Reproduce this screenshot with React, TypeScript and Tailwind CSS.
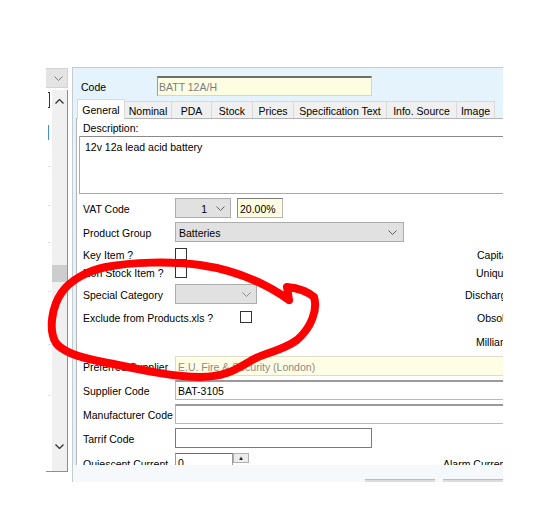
type Tab = { label: string; w: number; active?: boolean };

const tabs: Tab[] = [
  { label: "General", w: 48, active: true },
  { label: "Nominal", w: 47 },
  { label: "PDA", w: 40 },
  { label: "Stock", w: 41 },
  { label: "Prices", w: 41 },
  { label: "Specification Text", w: 93 },
  { label: "Info. Source", w: 70 },
  { label: "Image", w: 38 },
];

function ChevronDown({ color = "#606060" }: { color?: string }) {
  return (
    <svg width="9" height="5" viewBox="0 0 9 5" className="shrink-0">
      <polyline points="0.5,0.5 4.5,4.5 8.5,0.5" fill="none" stroke={color} strokeWidth="1" />
    </svg>
  );
}

function ChevronUp() {
  return (
    <svg width="9" height="5" viewBox="0 0 9 5" className="shrink-0">
      <polyline points="0.5,4.5 4.5,0.5 8.5,4.5" fill="none" stroke="#333" strokeWidth="1.3" />
    </svg>
  );
}

function Checkbox() {
  return <div className="h-[12px] w-[12px] shrink-0 border border-[#333] bg-white" />;
}

function Label({ children, w = 98 }: { children: React.ReactNode; w?: number }) {
  return (
    <div className="shrink-0 whitespace-nowrap pl-[6px] pt-[2px]" style={{ width: w }}>
      {children}
    </div>
  );
}

// labels of the next column, cut off by the window edge
function SideLabel({ children, w = 39, pl = 13 }: { children: string; w?: number; pl?: number }) {
  return (
    <div
      className="ml-auto shrink-0 overflow-hidden whitespace-nowrap pt-[2px]"
      style={{ width: w, paddingLeft: pl }}
    >
      {children}
    </div>
  );
}

function TextBox({ w, value }: { w: number; value?: string }) {
  return (
    <div
      className="flex h-[20px] shrink-0 items-center border border-[#b8b8b8] border-t-2 border-t-[#9a9a9a] bg-white pl-[2px] pt-[1px]"
      style={{ width: w }}
    >
      {value}
    </div>
  );
}

export default function App() {
  return (
    <div className="relative h-[524px] w-[557px] overflow-hidden bg-white font-['Liberation_Sans',Arial,sans-serif] text-[10.5px] leading-[12px] text-black">
      <div className="flex gap-[4px] pl-[46px] pt-[67px]">
        {/* left list strip */}
        <div className="flex w-[22px] shrink-0 flex-col">
          <div className="mt-[1px] flex h-[20px] items-center justify-end border border-l-0 border-[#d2d2d2] bg-[#e4e4e4] pr-[4px]">
            <ChevronDown color="#7a7a7a" />
          </div>
          <div className="mt-[2px] flex h-[382px] border-b border-r border-[#8f8f8f]">
            <div className="flex w-[6px] flex-col">
              <div className="ml-[2px] mt-[2px] h-[16px] w-[2px] border-y border-r border-[#333]" />
              <div className="ml-[2px] mt-[17px] h-[15px] w-[1px] bg-[#3f8fde]" />
              <div className="ml-[2px] mt-[26px] h-[1px] w-[3px] bg-[#d6e4f2]" />
              <div className="ml-[2px] mt-[38px] h-[1px] w-[3px] bg-[#d6e4f2]" />
              <div className="ml-[2px] mt-[36px] h-[1px] w-[3px] bg-[#d6e4f2]" />
              <div className="ml-[2px] mt-[48px] h-[1px] w-[3px] bg-[#d6e4f2]" />
              <div className="ml-[2px] mt-[52px] h-[1px] w-[3px] bg-[#d6e4f2]" />
              <div className="ml-[2px] mt-[50px] h-[1px] w-[3px] bg-[#d6e4f2]" />
            </div>
            <div className="flex w-[15px] flex-col items-center bg-[#f0f0f0] pt-[9px]">
              <ChevronUp />
              <div className="mt-[161px] h-[17px] w-full bg-[#cdcdcd]" />
              <div className="mt-[162px] rotate-180">
                <ChevronUp />
              </div>
            </div>
          </div>
        </div>

        {/* main panel */}
        <div className="flex w-[431px] shrink-0 flex-col border-l border-t border-[#c4ccd2] bg-[#e5f3fc]">
          <div className="flex h-[32px] items-start pt-[8px]">
            <div className="flex h-[20px] w-[84px] shrink-0 items-center pl-[8px] pt-[2px]">Code</div>
            <div className="flex h-[20px] w-[215px] items-center border border-[#d6d6c8] border-l-[#9a9a9a] border-t-2 border-t-[#6e6e6e] bg-[#fffde1] pl-[1px] pt-[1px] text-[#7c7c7c]">
              BATT 12A/H
            </div>
          </div>

          <div className="flex h-[18px] items-end pl-[4px]">
            {tabs.map((t) =>
              t.active ? (
                <div
                  key={t.label}
                  className="relative z-10 -mb-px flex h-[20px] items-center justify-center border-x border-t border-[#d9d9d9] bg-white"
                  style={{ width: t.w }}
                >
                  {t.label}
                </div>
              ) : (
                <div
                  key={t.label}
                  className="flex h-[17px] items-center justify-center border-r border-t border-[#d9d9d9] bg-[#f0f0f0] pt-[1px]"
                  style={{ width: t.w }}
                >
                  {t.label}
                </div>
              ),
            )}
          </div>

          <div className="flex">
            <div className="w-[3px] shrink-0" />
            <div className="flex h-[347px] w-[427px] flex-col overflow-hidden border-l border-t border-[#b4b4b4] bg-white">
              <div className="flex h-[17px] shrink-0 items-center pl-[6px] pt-[1px]">Description:</div>
              <div className="ml-[2px] h-[58px] w-[440px] shrink-0 border border-[#a9a9a9] border-t-[#8a8a8a] pl-[5px] pt-[4px]">
                12v 12a lead acid battery
              </div>

              <div className="mt-[4px] flex h-[20px] shrink-0 items-center">
                <Label>VAT Code</Label>
                <div className="flex h-[20px] w-[56px] items-center justify-end gap-[9px] border border-[#adadad] bg-[#e1e1e1] pr-[5px]">
                  <span className="pt-[2px]">1</span>
                  <ChevronDown />
                </div>
                <div className="ml-[6px] flex h-[20px] w-[46px] items-center border border-[#b4b4b4] border-l-[#8a8a8a] border-t-[#7a7a7a] bg-[#fffde1] pl-[2px] pt-[2px]">
                  20.00%
                </div>
              </div>

              <div className="mt-[4px] flex h-[20px] shrink-0 items-center">
                <Label>Product Group</Label>
                <div className="flex h-[20px] w-[229px] items-center justify-between border border-[#adadad] bg-[#e1e1e1] pl-[3px] pr-[6px]">
                  <span className="pt-[2px]">Batteries</span>
                  <ChevronDown />
                </div>
              </div>

              <div className="mt-[3px] flex h-[18px] shrink-0 items-center">
                <Label>Key Item ?</Label>
                <Checkbox />
                <SideLabel>Capital Item ?</SideLabel>
              </div>

              <div className="flex h-[18px] shrink-0 items-center">
                <Label>Non Stock Item ?</Label>
                <Checkbox />
                <SideLabel pl={12}>Unique Item ?</SideLabel>
              </div>

              <div className="mt-[3px] flex h-[20px] shrink-0 items-center">
                <Label>Special Category</Label>
                <div className="flex h-[20px] w-[82px] items-center justify-end border border-[#adadad] bg-[#e1e1e1] pr-[5px]">
                  <ChevronDown color="#8a8a8a" />
                </div>
                <SideLabel pl={1}>Discharge Time</SideLabel>
              </div>

              <div className="mt-[3px] flex h-[20px] shrink-0 items-center">
                <Label w={163}>Exclude from Products.xls ?</Label>
                <Checkbox />
                <SideLabel>Obsolete ?</SideLabel>
              </div>

              <div className="mt-[4px] flex h-[20px] shrink-0 items-center">
                <SideLabel pl={12}>Milliamp Hours</SideLabel>
              </div>

              <div className="mt-[5px] flex h-[20px] shrink-0 items-center">
                <Label>Preferred Supplier</Label>
                <div className="flex h-[20px] w-[340px] shrink-0 items-center border border-[#dcdccc] bg-[#fffde3] pl-[2px] pt-[2px] text-[#8a8a8a]">
                  E.U. Fire &amp; Security (London)
                </div>
              </div>

              <div className="mt-[4px] flex h-[20px] shrink-0 items-center">
                <Label>Supplier Code</Label>
                <TextBox w={340} value="BAT-3105" />
              </div>

              <div className="mt-[4px] flex h-[20px] shrink-0 items-center">
                <Label>Manufacturer Code</Label>
                <TextBox w={340} />
              </div>

              <div className="mt-[4px] flex h-[20px] shrink-0 items-center">
                <Label>Tarrif Code</Label>
                <div className="h-[20px] w-[197px] shrink-0 border border-[#7a7a7a] bg-white" />
              </div>

              <div className="mt-[5px] flex h-[20px] shrink-0 items-center">
                <Label>Quiescent Current</Label>
                <div className="flex h-[20px] w-[58px] shrink-0 items-start border border-[#9a9a9a] border-t-[#6e6e6e] pl-[2px] pt-[3px]">
                  0
                </div>
                <div className="flex h-[10px] w-[16px] shrink-0 items-center justify-center self-start border border-[#b0b0b0] bg-[#ececec] text-[6px] leading-none text-[#222]">
                  ▲
                </div>
                <SideLabel w={60} pl={0}>
                  Alarm Current
                </SideLabel>
              </div>
            </div>
          </div>

          <div className="flex h-[17px] justify-end gap-[8px] bg-[#f5f9fc] pt-[14px]">
            <div className="h-[3px] w-[70px] border-t border-[#bdbdbd] bg-[#dcdcdc]" />
            <div className="h-[3px] w-[60px] border-t border-[#bdbdbd] bg-[#dcdcdc]" />
          </div>
        </div>
      </div>

      {/* red hand-drawn annotation */}
      <svg
        className="pointer-events-none absolute left-0 top-0"
        width="557"
        height="524"
        viewBox="0 0 557 524"
      >
        <path
          d="M 289 300 L 287 287 C 297 288, 308 292, 314 297 C 318 310, 311 328, 297 340 C 285 349, 270 352, 256 358 C 240 366, 230 377, 200 377 C 168 377, 125 366, 98 361 C 78 357, 62 351, 56 343 C 48 330, 52 306, 62 292 C 70 281, 86 271, 106 267 C 132 262, 170 261, 200 265 C 235 270, 265 283, 289 300"
          fill="none"
          stroke="#ff0000"
          strokeWidth="8"
          strokeLinecap="round"
          strokeLinejoin="round"
        />
      </svg>
    </div>
  );
}
